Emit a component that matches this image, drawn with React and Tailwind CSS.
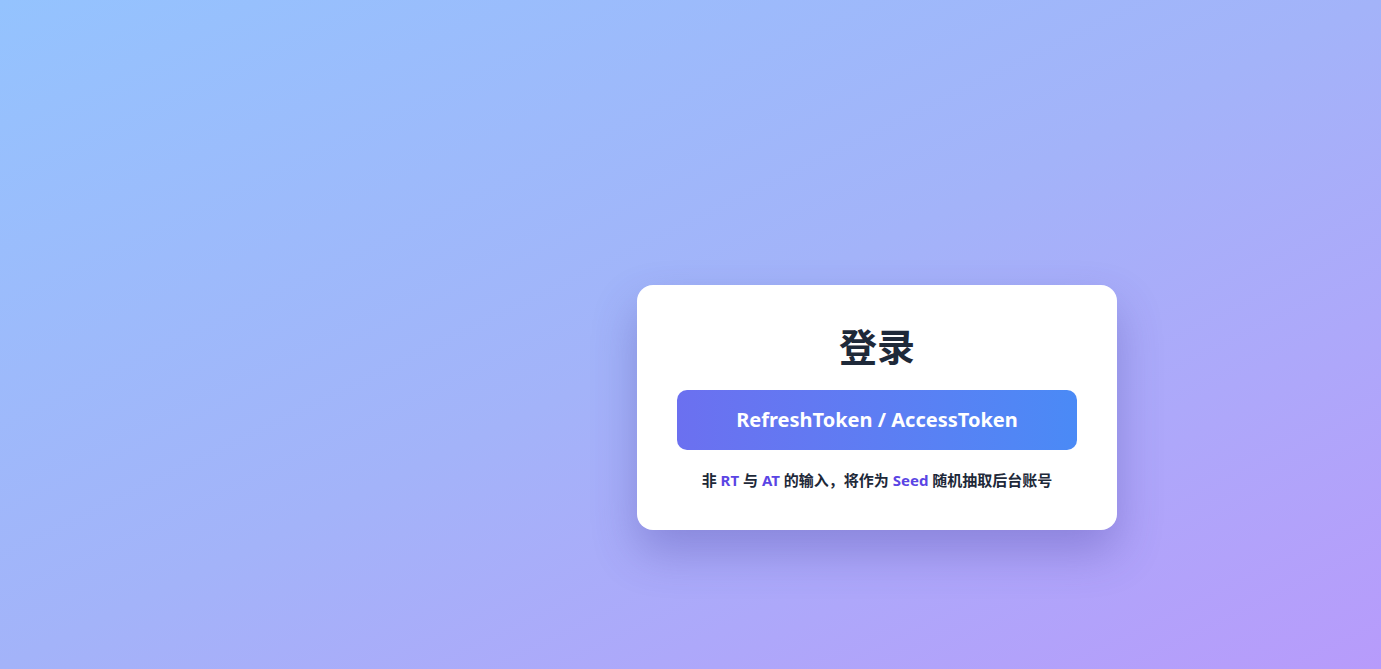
import React from "react";

const App = () => {
    return (
        <div
            className="min-h-screen w-full bg-gradient-to-br from-[#94c3fe] via-[#a3b3f9] to-[#b79bfb] pl-[637px] pt-[285px]"
            style={{ fontFamily: '"Segoe UI", "Noto Sans", "Noto Sans CJK SC", sans-serif' }}
        >
            <div className="w-[480px] h-[245px] bg-white rounded-2xl shadow-[0_22px_45px_rgba(60,50,150,0.3)] px-10 pt-[37px]">
                <h1 className="text-center text-[38px] leading-[48px] font-bold text-gray-800">
                    登录
                </h1>
                <button className="mt-[20px] w-full h-[60px] rounded-[10px] bg-gradient-to-r from-[#6b70f0] to-[#4a8af6] text-white text-[20px] font-bold">
                    RefreshToken / AccessToken
                </button>
                <p className="mt-5 text-center text-[15px] leading-5 font-bold text-gray-800">
                    非 <span className="text-[#5a45e4]">RT</span> 与 <span className="text-[#5a45e4]">AT</span> 的输入，将作为 <span className="text-[#5a45e4]">Seed</span> 随机抽取后台账号
                </p>
            </div>
        </div>
    );
};

export default App;
